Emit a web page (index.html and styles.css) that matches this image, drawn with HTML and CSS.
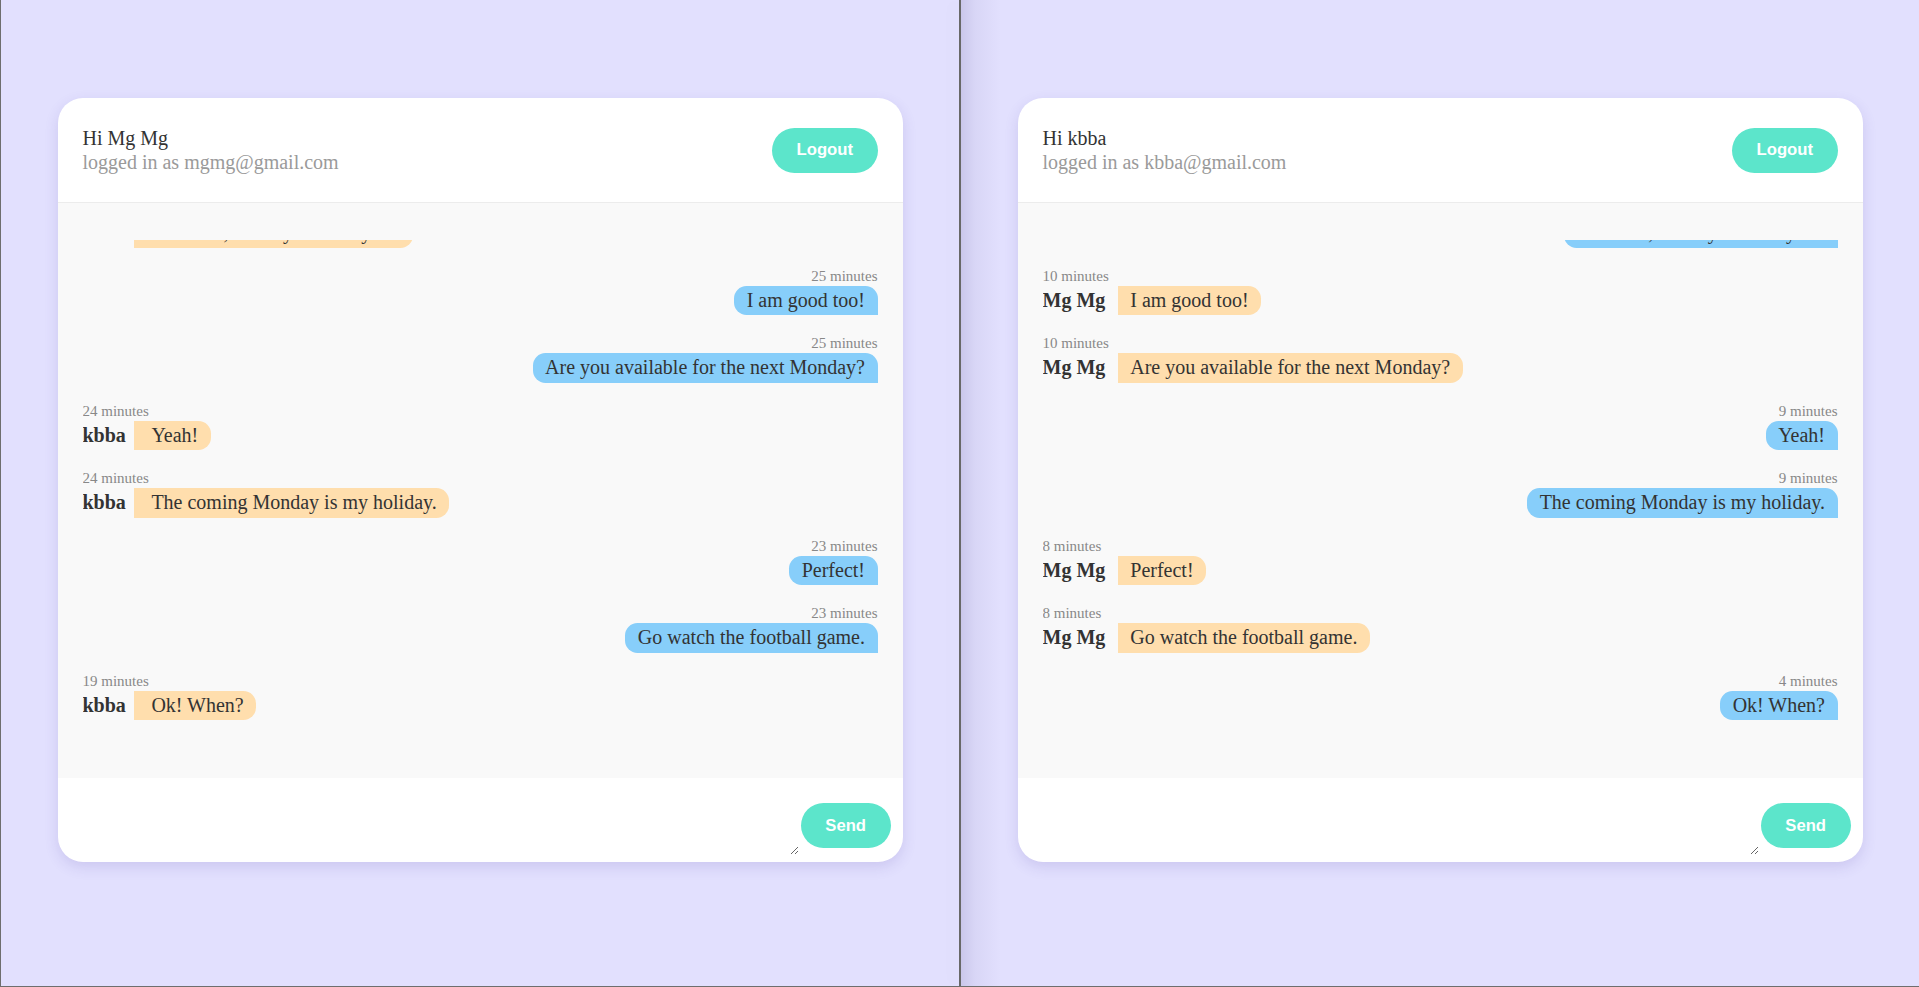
FILE: index.html
```html
<!DOCTYPE html>
<html lang="en">
<head>
<meta charset="utf-8">
<title>Chat</title>
<link rel="stylesheet" href="styles.css">
</head>
<body>
<div class="frame">
  <section class="pane pane-left">
    <div class="card">
      <header class="card-header">
        <div class="who">
          <div class="hi">Hi Mg Mg</div>
          <div class="email">logged in as mgmg@gmail.com</div>
        </div>
        <button class="btn">Logout</button>
      </header>
      <div class="messages">
        <div class="list">
          <div class="msg sent"><div class="time">27 minutes</div><div class="row"><span class="bubble">Hello!</span></div></div>
          <div class="msg recv"><div class="time">27 minutes</div><div class="row"><span class="name">kbba</span><span class="bubble">Hi!</span></div></div>
          <div class="msg sent"><div class="time">26 minutes</div><div class="row"><span class="bubble">How are you?</span></div></div>
          <div class="msg recv"><div class="time">26 minutes</div><div class="row"><span class="name">kbba</span><span class="bubble">I am fine, thank you. And you?</span></div></div>
          <div class="msg sent"><div class="time">25 minutes</div><div class="row"><span class="bubble">I am good too!</span></div></div>
          <div class="msg sent"><div class="time">25 minutes</div><div class="row"><span class="bubble">Are you available for the next Monday?</span></div></div>
          <div class="msg recv"><div class="time">24 minutes</div><div class="row"><span class="name">kbba</span><span class="bubble">Yeah!</span></div></div>
          <div class="msg recv"><div class="time">24 minutes</div><div class="row"><span class="name">kbba</span><span class="bubble">The coming Monday is my holiday.</span></div></div>
          <div class="msg sent"><div class="time">23 minutes</div><div class="row"><span class="bubble">Perfect!</span></div></div>
          <div class="msg sent"><div class="time">23 minutes</div><div class="row"><span class="bubble">Go watch the football game.</span></div></div>
          <div class="msg recv"><div class="time">19 minutes</div><div class="row"><span class="name">kbba</span><span class="bubble">Ok! When?</span></div></div>
        </div>
      </div>
      <footer class="composer">
        <textarea class="input" aria-label="Message"></textarea>
        <button class="btn btn-send">Send</button>
      </footer>
    </div>
  </section>
  <div class="divider"></div>
  <section class="pane pane-right">
    <div class="card">
      <header class="card-header">
        <div class="who">
          <div class="hi">Hi kbba</div>
          <div class="email">logged in as kbba@gmail.com</div>
        </div>
        <button class="btn">Logout</button>
      </header>
      <div class="messages">
        <div class="list">
          <div class="msg recv"><div class="time">12 minutes</div><div class="row"><span class="name">Mg Mg</span><span class="bubble">Hello!</span></div></div>
          <div class="msg sent"><div class="time">12 minutes</div><div class="row"><span class="bubble">Hi!</span></div></div>
          <div class="msg recv"><div class="time">11 minutes</div><div class="row"><span class="name">Mg Mg</span><span class="bubble">How are you?</span></div></div>
          <div class="msg sent"><div class="time">11 minutes</div><div class="row"><span class="bubble">I am fine, thank you. And you?</span></div></div>
          <div class="msg recv"><div class="time">10 minutes</div><div class="row"><span class="name">Mg Mg</span><span class="bubble">I am good too!</span></div></div>
          <div class="msg recv"><div class="time">10 minutes</div><div class="row"><span class="name">Mg Mg</span><span class="bubble">Are you available for the next Monday?</span></div></div>
          <div class="msg sent"><div class="time">9 minutes</div><div class="row"><span class="bubble">Yeah!</span></div></div>
          <div class="msg sent"><div class="time">9 minutes</div><div class="row"><span class="bubble">The coming Monday is my holiday.</span></div></div>
          <div class="msg recv"><div class="time">8 minutes</div><div class="row"><span class="name">Mg Mg</span><span class="bubble">Perfect!</span></div></div>
          <div class="msg recv"><div class="time">8 minutes</div><div class="row"><span class="name">Mg Mg</span><span class="bubble">Go watch the football game.</span></div></div>
          <div class="msg sent"><div class="time">4 minutes</div><div class="row"><span class="bubble">Ok! When?</span></div></div>
        </div>
      </div>
      <footer class="composer">
        <textarea class="input" aria-label="Message"></textarea>
        <button class="btn btn-send">Send</button>
      </footer>
    </div>
  </section>
</div>
</body>
</html>
```

FILE: styles.css
```css
* { box-sizing: border-box; }

html, body {
  margin: 0;
  padding: 0;
  background: #e2e0fe;
  font-family: "Liberation Serif", "Times New Roman", serif;
  color: #333;
}

.frame {
  display: flex;
  height: 987px;
  border-left: 1px solid #6e6e6e;
  border-bottom: 1px solid #6e6e6e;
  background: #e2e0fe;
}

.pane {
  width: 958px;
  flex: none;
  padding-top: 98px;
  background: #e2e0fe;
}

.pane-right {
  flex: 1;
  width: auto;
  background: linear-gradient(to right, rgba(60, 50, 120, 0.14) 0, rgba(60, 50, 120, 0.06) 14px, rgba(60, 50, 120, 0) 40px), #e2e0fe;
}

.divider {
  width: 2px;
  flex: none;
  background: #686868;
  box-shadow: -6px 0 14px rgba(60, 50, 120, 0.06);
  position: relative;
  z-index: 1;
}

.card {
  width: 845px;
  margin: 0 auto;
  background: #fff;
  border-radius: 25px;
  overflow: hidden;
  box-shadow: 0 5px 14px rgba(90, 70, 170, 0.16);
}

.card-header {
  height: 105px;
  padding: 0 25px;
  display: flex;
  align-items: center;
  justify-content: space-between;
  border-bottom: 1px solid #ececec;
}

.hi {
  font-size: 20px;
  line-height: 24px;
  color: #333;
}

.email {
  font-size: 20px;
  line-height: 24px;
  color: #9a9a9a;
}

.btn {
  height: 45px;
  padding: 0 24.5px;
  border: none;
  border-radius: 23px;
  background: #5ce5cb;
  color: #fff;
  font-family: "Liberation Sans", Arial, sans-serif;
  font-weight: bold;
  font-size: 16.67px;
  cursor: pointer;
}

.messages {
  height: 575px;
  background: #f9f9f9;
  padding: 37px 25px 38px;
  display: flex;
  flex-direction: column;
}

.list {
  flex: 1;
  min-height: 0;
  overflow: hidden;
  display: flex;
  flex-direction: column;
  justify-content: flex-end;
}

.msg {
  display: flex;
  flex-direction: column;
  flex: none;
  margin-bottom: 20px;
}

.msg.sent { align-items: flex-end; }
.msg.recv { align-items: flex-start; }

.time {
  font-size: 15px;
  line-height: 17.25px;
  color: #888;
  margin-bottom: 0.75px;
}

.row {
  display: flex;
  align-items: center;
}

.name {
  font-size: 20px;
  line-height: 23px;
  font-weight: bold;
  color: #333;
  margin-right: 8px;
}

.pane-right .name {
  margin-right: 12.5px;
}

.bubble {
  font-size: 20px;
  line-height: 23px;
  padding: 3.25px 12.5px;
  color: #333;
  white-space: nowrap;
}

.sent .bubble {
  background: #87cefa;
  border-radius: 12.5px 12.5px 0 12.5px;
}

.recv .bubble {
  background: #ffdead;
  border-radius: 0 12.5px 12.5px 0;
}

.pane-left .recv .bubble {
  padding-left: 17.5px;
}

.composer {
  height: 84px;
  padding: 7px 12px 7px 25px;
  display: flex;
  align-items: flex-end;
}

.input {
  flex: 1;
  height: 70px;
  margin: 0 2px 0 0;
  padding: 0;
  border: none;
  outline: none;
  background: #fff;
  font-family: "Liberation Serif", serif;
  font-size: 20px;
}

.btn-send {
  margin-bottom: 7px;
}
```
